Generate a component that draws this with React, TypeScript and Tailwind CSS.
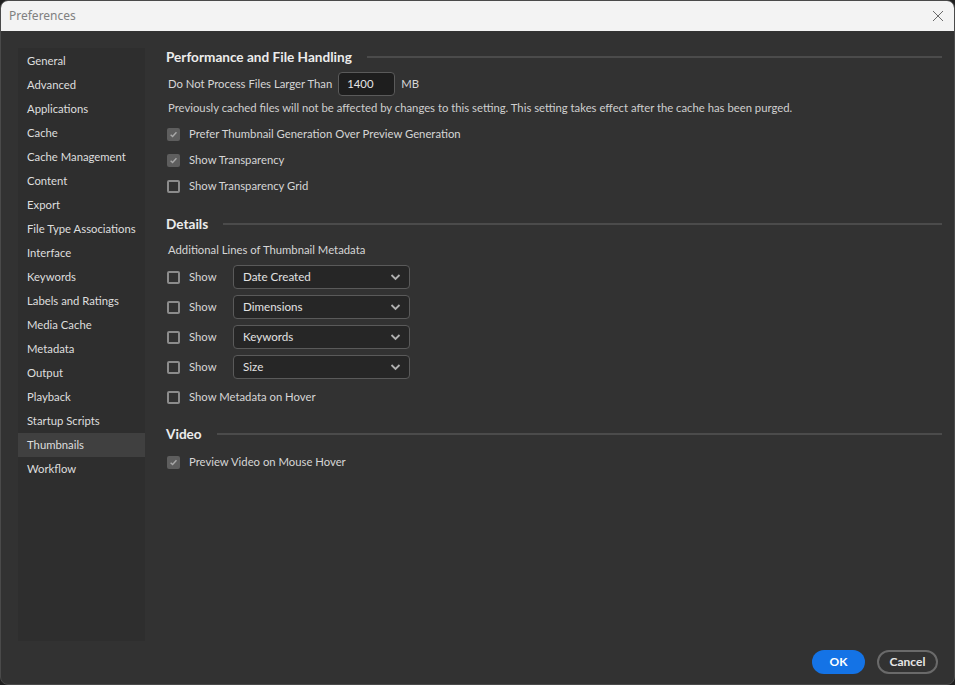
import React from "react";

const nav = [
  "General","Advanced","Applications","Cache","Cache Management","Content","Export",
  "File Type Associations","Interface","Keywords","Labels and Ratings","Media Cache",
  "Metadata","Output","Playback","Startup Scripts","Thumbnails","Workflow",
];

function Check({ checked }: { checked?: boolean }) {
  if (checked) {
    return (
      <span className="w-[13px] h-[13px] rounded-[2px] bg-[#5e5e5e] flex items-center justify-center shrink-0">
        <svg width="9" height="9" viewBox="0 0 10 10">
          <path d="M1.8 5.2 L4 7.3 L8.3 2.6" fill="none" stroke="#a8a8a8" strokeWidth="1.6" />
        </svg>
      </span>
    );
  }
  return <span className="w-[13px] h-[13px] rounded-[2px] border-2 border-[#8c8c8c] shrink-0" />;
}

function CheckRow({ label, checked }: { label: string; checked?: boolean }) {
  return (
    <div className="h-[26px] flex items-center pl-[1px]">
      <Check checked={checked} />
      <span className="ml-[9px] text-[11.3px] text-[#d6d6d6]">{label}</span>
    </div>
  );
}

function Heading({ title, className = "" }: { title: string; className?: string }) {
  return (
    <div className={"h-[18px] flex items-center " + className}>
      <span className="text-[13.6px] font-bold text-[#ececec] whitespace-nowrap">{title}</span>
      <div className="flex-1 h-[2px] bg-[#4b4b4b] ml-[15px]" />
    </div>
  );
}

function ShowRow({ value }: { value: string }) {
  return (
    <div className="h-[30px] flex items-center pl-[1px]">
      <Check />
      <span className="ml-[9px] w-[44px] text-[11.3px] text-[#d6d6d6]">Show</span>
      <div className="w-[177px] h-[24px] rounded-[4px] border border-[#5a5a5a] bg-[#262626] flex items-center justify-between pl-[9px] pr-[8px]">
        <span className="text-[11.6px] text-[#e2e2e2]">{value}</span>
        <svg width="11" height="8" viewBox="0 0 11 8">
          <path d="M1.5 2 L5.5 6 L9.5 2" fill="none" stroke="#b0b0b0" strokeWidth="1.8" />
        </svg>
      </div>
    </div>
  );
}

export default function App() {
  return (
    <div className="w-[955px] h-[685px] bg-[#1f1f1f]" style={{ fontFamily: "Lato, 'Noto Sans', sans-serif" }}>
      <div className="w-full h-full rounded-[8px] overflow-hidden border border-[#4a4a4a] bg-[#323232] flex flex-col">
        <div className="h-[30px] bg-[#f3f3f3] flex items-center justify-between pl-[8px] pr-[10px] shrink-0">
          <span className="text-[12px] text-[#808080]" style={{ fontFamily: "'Noto Sans', sans-serif" }}>Preferences</span>
          <svg width="12" height="12" viewBox="0 0 12 12">
            <path d="M1 1 L11 11 M11 1 L1 11" stroke="#6a6a6a" strokeWidth="1" />
          </svg>
        </div>
        <div className="flex-1 flex flex-col pt-[17px] pl-[17px] pr-[12px]">
          <div className="flex">
            <div className="w-[127px] h-[593px] bg-[#2e2e2e] pt-[1px] shrink-0">
              {nav.map((n) => (
                <div
                  key={n}
                  className={
                    "h-6 flex items-center pl-[9px] text-[11.3px] text-[#dedede] " +
                    (n === "Thumbnails" ? "bg-[#404040]" : "")
                  }
                >
                  {n}
                </div>
              ))}
            </div>
            <div className="flex-1 ml-[21px] flex flex-col">
              <Heading title="Performance and File Handling" />
              <div className="mt-[6px] h-[24px] flex items-center pl-[2px]">
                <span className="text-[11.3px] text-[#d6d6d6]">Do Not Process Files Larger Than</span>
                <div className="ml-[6px] w-[57px] h-[24px] rounded-[4px] border border-[#5a5a5a] bg-[#1e1e1e] flex items-center pl-[8px] text-[11.3px] text-[#e6e6e6]">
                  1400
                </div>
                <span className="ml-[6px] text-[11.3px] text-[#d6d6d6]">MB</span>
              </div>
              <div className="mt-[4px] h-[16px] flex items-center pl-[2px] text-[11.3px] text-[#cfcfcf] whitespace-nowrap">
                Previously cached files will not be affected by changes to this setting. This setting takes effect after the cache has been purged.
              </div>
              <div className="mt-[5px]">
                <CheckRow label="Prefer Thumbnail Generation Over Preview Generation" checked />
                <CheckRow label="Show Transparency" checked />
                <CheckRow label="Show Transparency Grid" />
              </div>
              <Heading title="Details" className="mt-[16px]" />
              <div className="mt-[9px] h-[16px] flex items-center pl-[2px] text-[11.3px] text-[#d6d6d6]">
                Additional Lines of Thumbnail Metadata
              </div>
              <div className="mt-[4px]">
                <ShowRow value="Date Created" />
                <ShowRow value="Dimensions" />
                <ShowRow value="Keywords" />
                <ShowRow value="Size" />
                <div className="h-[30px] flex items-center pl-[1px]">
                  <Check />
                  <span className="ml-[9px] text-[11.3px] text-[#d6d6d6]">Show Metadata on Hover</span>
                </div>
              </div>
              <Heading title="Video" className="mt-[13px]" />
              <div className="mt-[6px]">
                <CheckRow label="Preview Video on Mouse Hover" checked />
              </div>
            </div>
          </div>
          <div className="flex justify-end gap-[12px] pt-[9px] pr-[4px]">
            <button className="w-[53px] h-[24px] rounded-full bg-[#1473e6] text-white text-[12px] font-bold">
              OK
            </button>
            <button className="w-[61px] h-[24px] rounded-full border-2 border-[#6a6a6a] text-[#e6e6e6] text-[12px] font-bold">
              Cancel
            </button>
          </div>
        </div>
      </div>
    </div>
  );
}
